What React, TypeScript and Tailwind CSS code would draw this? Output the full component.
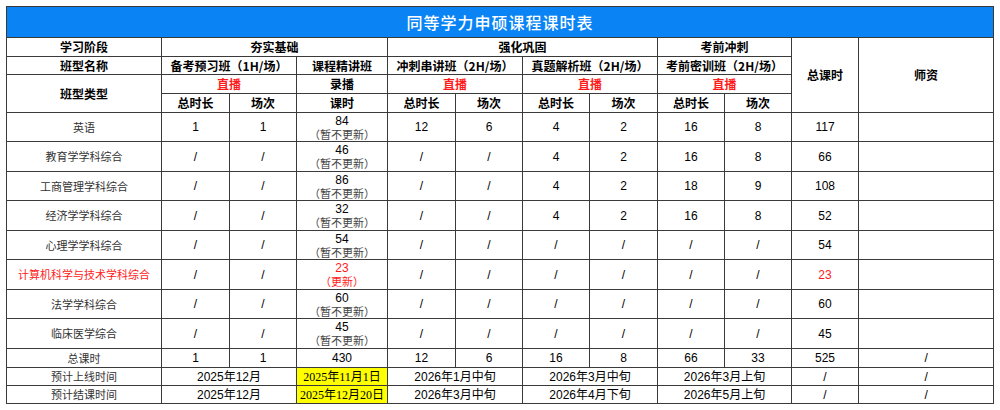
import React from 'react';

type Row = {
  name: string;
  red?: boolean;
  cells: string[]; // 总时长, 场次, 课时, then 6 more
  note: string;
  total: string;
};

const rows: Row[] = [
  { name: '英语', cells: ['1', '1', '84', '12', '6', '4', '2', '16', '8'], note: '（暂不更新）', total: '117' },
  { name: '教育学学科综合', cells: ['/', '/', '46', '/', '/', '4', '2', '16', '8'], note: '（暂不更新）', total: '66' },
  { name: '工商管理学科综合', cells: ['/', '/', '86', '/', '/', '4', '2', '18', '9'], note: '（暂不更新）', total: '108' },
  { name: '经济学学科综合', cells: ['/', '/', '32', '/', '/', '4', '2', '16', '8'], note: '（暂不更新）', total: '52' },
  { name: '心理学学科综合', cells: ['/', '/', '54', '/', '/', '/', '/', '/', '/'], note: '（暂不更新）', total: '54' },
  { name: '计算机科学与技术学科综合', red: true, cells: ['/', '/', '23', '/', '/', '/', '/', '/', '/'], note: '（更新）', total: '23' },
  { name: '法学学科综合', cells: ['/', '/', '60', '/', '/', '/', '/', '/', '/'], note: '（暂不更新）', total: '60' },
  { name: '临床医学综合', cells: ['/', '/', '45', '/', '/', '/', '/', '/', '/'], note: '（暂不更新）', total: '45' },
];

const rowHeights = ['h-[29px]', 'h-[30px]', 'h-[29px]', 'h-[30px]', 'h-[29px]', 'h-[30px]', 'h-[29px]', 'h-[30px]'];

const cjk = "font-['Noto_Sans_CJK_SC',sans-serif]";
const num = "font-['Liberation_Sans','Noto_Sans_CJK_SC',sans-serif]";
const td = 'border border-[#3a3a3a] p-0 text-center align-middle leading-none';
const head = `${td} ${cjk} text-[12px] font-bold text-black`;

export default function App() {
  return (
    <div className="bg-white pl-[6px] pt-[6px]">
      <table className="w-[987px] table-fixed border-collapse border border-[#3a3a3a]">
        <colgroup>
          <col className="w-[155px]" />
          <col className="w-[68px]" />
          <col className="w-[67px]" />
          <col className="w-[91px]" />
          <col className="w-[68px]" />
          <col className="w-[67px]" />
          <col className="w-[67px]" />
          <col className="w-[68px]" />
          <col className="w-[67px]" />
          <col className="w-[67px]" />
          <col className="w-[67px]" />
          <col className="w-[135px]" />
        </colgroup>
        <tbody>
          <tr className="h-[31px]">
            <td colSpan={12} className={`${td} bg-[#0a84f4] ${cjk} text-[16px] font-medium tracking-[1px] text-white`}>
              同等学力申硕课程课时表
            </td>
          </tr>
          <tr className="h-[19px]">
            <td className={head}>学习阶段</td>
            <td colSpan={3} className={head}>夯实基础</td>
            <td colSpan={4} className={head}>强化巩固</td>
            <td colSpan={2} className={head}>考前冲刺</td>
            <td rowSpan={4} className={head}>总课时</td>
            <td rowSpan={4} className={head}>师资</td>
          </tr>
          <tr className="h-[18px]">
            <td className={head}>班型名称</td>
            <td colSpan={2} className={head}>备考预习班（1H/场）</td>
            <td className={head}>课程精讲班</td>
            <td colSpan={2} className={head}>冲刺串讲班（2H/场）</td>
            <td colSpan={2} className={head}>真题解析班（2H/场）</td>
            <td colSpan={2} className={head}>考前密训班（2H/场）</td>
          </tr>
          <tr className="h-[19px]">
            <td rowSpan={2} className={head}>班型类型</td>
            <td colSpan={2} className={`${head} !text-[#ff1a1a]`}>直播</td>
            <td className={head}>录播</td>
            <td colSpan={2} className={`${head} !text-[#ff1a1a]`}>直播</td>
            <td colSpan={2} className={`${head} !text-[#ff1a1a]`}>直播</td>
            <td colSpan={2} className={`${head} !text-[#ff1a1a]`}>直播</td>
          </tr>
          <tr className="h-[19px]">
            <td className={head}>总时长</td>
            <td className={head}>场次</td>
            <td className={head}>课时</td>
            <td className={head}>总时长</td>
            <td className={head}>场次</td>
            <td className={head}>总时长</td>
            <td className={head}>场次</td>
            <td className={head}>总时长</td>
            <td className={head}>场次</td>
          </tr>

          {rows.map((r, i) => (
            <tr key={r.name} className={rowHeights[i]}>
              <td className={`${td} ${cjk} text-[11px] ${r.red ? 'text-[#ff2020]' : 'text-[#333]'}`}>{r.name}</td>
              {r.cells.map((c, j) =>
                j === 2 ? (
                  <td key={j} className={`${td} ${r.red ? 'text-[#ff1a1a]' : 'text-black'}`}>
                    <div className={`${num} text-[12px] leading-[14px]`}>{c}</div>
                    <div className={`${cjk} text-[11px] leading-[13px] ${r.red ? '' : 'text-[#444]'}`}>{r.note}</div>
                  </td>
                ) : (
                  <td key={j} className={`${td} ${num} text-[12px] text-black`}>{c}</td>
                )
              )}
              <td className={`${td} ${num} text-[12px] ${r.red ? 'text-[#ff1a1a]' : 'text-black'}`}>{r.total}</td>
              <td className={td}></td>
            </tr>
          ))}

          <tr className="h-[19px]">
            <td className={`${td} ${cjk} text-[11px] text-[#333]`}>总课时</td>
            {['1', '1', '430', '12', '6', '16', '8', '66', '33', '525', '/'].map((c, j) => (
              <td key={j} className={`${td} ${num} text-[12px] text-black`}>{c}</td>
            ))}
          </tr>
          <tr className="h-[18px]">
            <td className={`${td} ${cjk} text-[11px] text-[#333]`}>预计上线时间</td>
            <td colSpan={2} className={`${td} ${num} text-[12px] text-black`}>2025年12月</td>
            <td className={`${td} bg-[#ffff00] font-['Liberation_Serif','Noto_Sans_CJK_SC',serif] text-[12px] text-black`}>2025年11月1日</td>
            <td colSpan={2} className={`${td} ${num} text-[12px] text-black`}>2026年1月中旬</td>
            <td colSpan={2} className={`${td} ${num} text-[12px] text-black`}>2026年3月中旬</td>
            <td colSpan={2} className={`${td} ${num} text-[12px] text-black`}>2026年3月上旬</td>
            <td className={`${td} ${num} text-[12px] text-black`}>/</td>
            <td className={`${td} ${num} text-[12px] text-black`}>/</td>
          </tr>
          <tr className="h-[18px]">
            <td className={`${td} ${cjk} text-[11px] text-[#333]`}>预计结课时间</td>
            <td colSpan={2} className={`${td} ${num} text-[12px] text-black`}>2025年12月</td>
            <td className={`${td} bg-[#ffff00] font-['Liberation_Serif','Noto_Sans_CJK_SC',serif] text-[12px] text-black`}>2025年12月20日</td>
            <td colSpan={2} className={`${td} ${num} text-[12px] text-black`}>2026年3月中旬</td>
            <td colSpan={2} className={`${td} ${num} text-[12px] text-black`}>2026年4月下旬</td>
            <td colSpan={2} className={`${td} ${num} text-[12px] text-black`}>2026年5月上旬</td>
            <td className={`${td} ${num} text-[12px] text-black`}>/</td>
            <td className={`${td} ${num} text-[12px] text-black`}>/</td>
          </tr>
        </tbody>
      </table>
    </div>
  );
}
